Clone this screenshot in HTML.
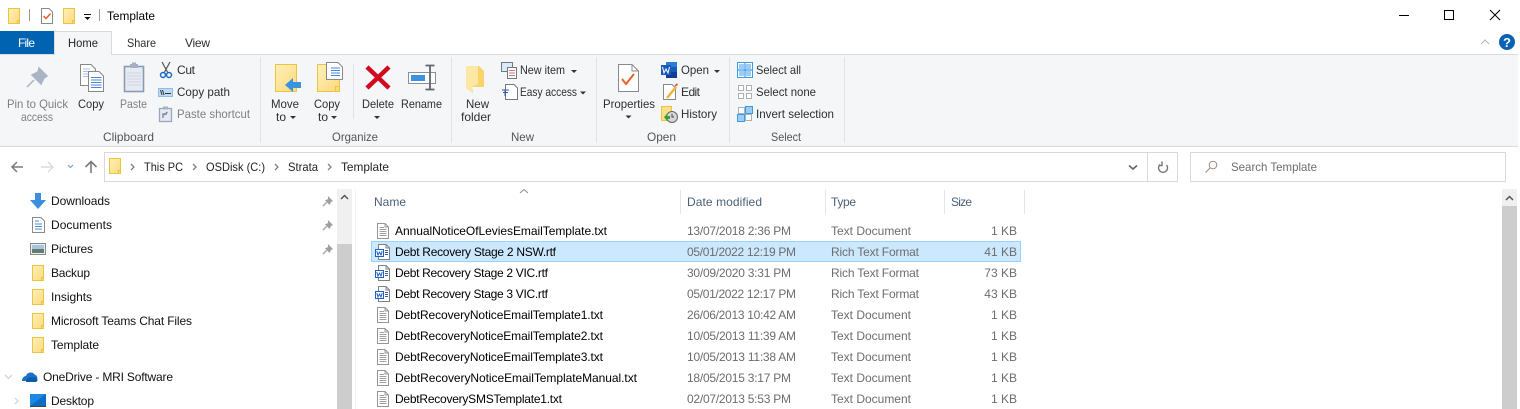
<!DOCTYPE html>
<html lang="en"><head><meta charset="utf-8"><title>Template</title>
<style>
html,body{margin:0;padding:0;background:#fff;width:1520px;height:409px;overflow:hidden}
svg{display:block}
text{font-family:"Liberation Sans",sans-serif;font-size:12px;fill:#1e1e1e}
.d{fill:#7f7f7f}.g{fill:#555}.r{fill:#2e2e2e}.h{fill:#4c607a}.m{fill:#6d6d6d}
</style></head><body>
<svg width="1520" height="409" viewBox="0 0 1520 409" xmlns="http://www.w3.org/2000/svg">
<defs>
<linearGradient id="fy" x1="0" y1="0" x2="1" y2="1"><stop offset="0" stop-color="#fff0b8"/><stop offset="1" stop-color="#fcd97c"/></linearGradient>
<symbol id="fold" overflow="visible"><path d="M.5.5H11.5V15.5H.5Z" fill="url(#fy)" stroke="#e9c544"/><path d="M9.500 15.500V12.500H11.500" fill="none" stroke="#e9c544"/></symbol>
<symbol id="txt" overflow="visible"><path d="M.5.5H8L11.5 4V15.5H.5Z" fill="#fff" stroke="#959595"/><path d="M8 .5V4H11.5" fill="none" stroke="#959595"/><path d="M2.500 4.500H7M2.500 6.500H9.500M2.500 8.500H9.500M2.500 10.500H9.500M2.500 12.500H9.500" stroke="#a0a0a0"/></symbol>
<symbol id="doc" overflow="visible"><path d="M3.500.5H11L14.500 4V15.500H3.500Z" fill="#fff" stroke="#808080"/><path d="M11 .5V4H14.500" fill="none" stroke="#808080"/><path d="M10 6.500H13M10 8.500H13M10 10.500H13" stroke="#2b5fb4"/><rect x=".5" y="5.500" width="8" height="7" fill="#fff" stroke="#1f5fbf"/><path d="M1.800 7L3 11L4.500 8.200L6 11L7.200 7" fill="none" stroke="#1f5fbf"/></symbol>
<symbol id="pin" overflow="visible"><path d="M6 1L11 6L9 7L7.500 10L3 5.500L6 4Z" fill="#a0a0a0"/><path d="M4.500 7.500L1 11" stroke="#a0a0a0" stroke-width="1.300"/></symbol>
</defs>
<rect width="1520" height="409" fill="#fff"/>

<!-- title bar -->
<use href="#fold" x="8" y="8"/>
<path d="M29.500 9V21M99.500 9V21" stroke="#9a9a9a"/>
<path d="M41.500 8.500H49L52.500 12V23.500H41.500Z" fill="#fff" stroke="#8a8a8a"/>
<path d="M43.500 16L46 18.500L50.500 13.500" fill="none" stroke="#e8622a" stroke-width="1.500"/>
<use href="#fold" x="63" y="8"/>
<path d="M84 14.500H91" stroke="#111"/><path d="M84.500 17H90.500L87.500 20Z" fill="#111"/>
<text x="107" y="20" textLength="48" lengthAdjust="spacingAndGlyphs" style="fill:#000">Template</text>
<path d="M1399 15.500H1409" stroke="#000"/>
<rect x="1444.500" y="10.500" width="9" height="9" fill="none" stroke="#000"/>
<path d="M1490 10L1500 20M1500 10L1490 20" stroke="#000"/>

<!-- tabs -->
<rect x="0" y="31" width="54" height="23" fill="#0063b1"/>
<text x="18" y="47" textLength="17" style="fill:#fff">File</text>
<rect x="0" y="54" width="1518" height="1" fill="#dadbdc"/>
<path d="M54.500 55V31.500H111.500V55" fill="#f5f6f7" stroke="#dadbdc"/>
<text x="68" y="47" textLength="30" lengthAdjust="spacingAndGlyphs" style="fill:#222">Home</text>
<text x="127" y="47" textLength="29" lengthAdjust="spacingAndGlyphs" class="r">Share</text>
<text x="185" y="47" textLength="25" class="r">View</text>
<path d="M1481 44L1485 40L1489 44" fill="none" stroke="#b5b5b5"/>
<circle cx="1507" cy="42" r="8" fill="#0a62b5"/>
<text x="1507" y="47" text-anchor="middle" style="fill:#fff;font-weight:bold;font-size:13px">?</text>

<!-- ribbon -->
<rect x="0" y="55" width="1518" height="91" fill="#f5f6f7"/>
<rect x="0" y="146" width="1518" height="1" fill="#dadbdc"/>
<path d="M260.500 57V143M451.500 57V143M596.500 57V143M729.500 57V143M844.500 57V143" stroke="#e1e3e6"/>
<path d="M353.500 64V119" stroke="#e1e3e6"/>

<!-- clipboard -->
<path d="M39 68L47 76L44 78L41 84L32 75L38 72Z M34 80L27 87" fill="#a9b4c6" stroke="#a9b4c6" stroke-width="1.500"/>
<path d="M80.500 64.500H91L95.500 69V85.500H80.500Z" fill="#fff" stroke="#888"/>
<path d="M83 69H90M83 71.500H93M83 74H93M83 76.500H93" stroke="#a8c0e8"/>
<path d="M88.500 71.500H99L103.500 76V91.500H88.500Z" fill="#fff" stroke="#888"/>
<path d="M91 77.500H101.500M91 80H101.500M91 82.500H101.500M91 85H101.500M91 87.500H101.500" stroke="#4a86d8"/>
<rect x="124.500" y="66.500" width="19" height="25" fill="#e6eaf2" stroke="#8b9ab5" stroke-width="1.600"/>
<path d="M127 73H141M127 76H141M127 79H141M127 82H141M127 85H141" stroke="#cdd4e2"/>
<rect x="130" y="64" width="8" height="4" fill="#a5b0c4"/><rect x="132" y="62.500" width="4" height="2" fill="#a5b0c4"/>
<path d="M162 62L168 73M170 62L164 73" stroke="#555" stroke-width="1.200"/>
<circle cx="163" cy="75" r="2.500" fill="none" stroke="#1c6cc4" stroke-width="1.500"/><circle cx="169" cy="75" r="2.500" fill="none" stroke="#1c6cc4" stroke-width="1.500"/>
<text x="177" y="74" textLength="18" class="r">Cut</text>
<rect x="158.500" y="88.500" width="14" height="8" fill="#bcdcf6" stroke="#8fbde6"/>
<path d="M160.500 90L162 95M162.500 90L164 95M165 93.500H171" stroke="#333"/>
<text x="177" y="96" textLength="53" lengthAdjust="spacingAndGlyphs" class="r">Copy path</text>
<rect x="159.500" y="108.500" width="12" height="13" fill="#e6eaf2" stroke="#9aa6bc" stroke-width="1.300"/><rect x="163" y="106.500" width="5" height="3" fill="#a5b0c4"/>
<path d="M163 118V114H167M164 115L167.500 112" fill="none" stroke="#7c8aa3" stroke-width="1.400"/>
<text x="177" y="118" textLength="73" lengthAdjust="spacingAndGlyphs" class="d">Paste shortcut</text>
<text x="7" y="108" textLength="61" lengthAdjust="spacingAndGlyphs" class="d">Pin to Quick</text>
<text x="21" y="121" textLength="32" lengthAdjust="spacingAndGlyphs" class="d">access</text>
<text x="78" y="108" textLength="26" lengthAdjust="spacingAndGlyphs" class="r">Copy</text>
<text x="120" y="108" textLength="27" lengthAdjust="spacingAndGlyphs" class="d">Paste</text>
<text x="103" y="141" textLength="51" lengthAdjust="spacingAndGlyphs" class="g">Clipboard</text>

<!-- organize -->
<path d="M275.500 64.500H296.500V91.500H275.500Z" fill="url(#fy)" stroke="#e9c544"/>
<path d="M285 85L293 78V82H301V88H293V92Z" fill="#3b93e0"/>
<text x="271" y="108" textLength="28" lengthAdjust="spacingAndGlyphs" class="r">Move</text>
<text x="276" y="121" class="r">to</text><path d="M290 116H296L293 119Z" fill="#333"/>
<path d="M317.500 64.500H339.500V91.500H317.500Z" fill="url(#fy)" stroke="#e9c544"/><path d="M335.500 91V86.500H339.500" fill="none" stroke="#e9c544"/>
<path d="M326.500 62.500H338L342.500 67V79.500H326.500Z" fill="#fff" stroke="#888"/>
<path d="M331 68H340M331 70.500H340M331 73H340M331 75.500H340" stroke="#4a86d8"/>
<text x="314" y="108" textLength="26" lengthAdjust="spacingAndGlyphs" class="r">Copy</text>
<text x="318" y="121" class="r">to</text><path d="M331 116H337L334 119Z" fill="#333"/>
<path d="M367 67L389 88M389 67L367 88" stroke="#d2081f" stroke-width="4.500"/>
<text x="362" y="108" textLength="32" lengthAdjust="spacingAndGlyphs" class="r">Delete</text><path d="M374 116H380L377 119Z" fill="#333"/>
<rect x="408.500" y="72.500" width="27" height="11" fill="#fff" stroke="#8a8f99"/>
<rect x="411" y="75" width="14" height="6" fill="#3b93e0"/>
<path d="M430 66V89M425.500 65.500H434.500M425.500 89.500H434.500" stroke="#60656e" stroke-width="1.800" fill="none"/>
<text x="401" y="108" textLength="41" lengthAdjust="spacingAndGlyphs" class="r">Rename</text>
<text x="332" y="141" textLength="46" lengthAdjust="spacingAndGlyphs" class="g">Organize</text>

<!-- new -->
<path d="M466 66H479L484 71V87H472L473 93L466 88Z" fill="#fbd36b"/><path d="M466 66H478V84L472 87V93L466 88Z" fill="#fde7a4"/>
<text x="466" y="108" textLength="23" lengthAdjust="spacingAndGlyphs" class="r">New</text>
<text x="461" y="121" class="r">folder</text>
<rect x="501.500" y="62.500" width="11" height="9" fill="#dbe9f8" stroke="#6d7a8c"/>
<path d="M507.500 67.500H516.500V78.500H507.500Z" fill="#fff" stroke="#777"/><path d="M509 70.500H515M509 73H515M509 75.500H515" stroke="#c47a7a"/>
<text x="520" y="74" textLength="45" lengthAdjust="spacingAndGlyphs" class="r">New item</text><path d="M571 70H577L574 73Z" fill="#333"/>
<path d="M505.500 84.500H514L517.500 88V99.500H505.500Z" fill="#fff" stroke="#777"/>
<path d="M502 90H509M503 92.500H508M505 90V96" stroke="#2b5fa8" fill="none"/>
<text x="520" y="96" textLength="57" lengthAdjust="spacingAndGlyphs" class="r">Easy access</text><path d="M580 91.500H586L583 94.500Z" fill="#333"/>
<text x="511" y="141" textLength="23" lengthAdjust="spacingAndGlyphs" class="g">New</text>

<!-- open -->
<path d="M618.500 64.500H632L638.500 71V91.500H618.500Z" fill="#fff" stroke="#8a8a8a"/><path d="M632 64.500V71H638.500" fill="none" stroke="#8a8a8a"/>
<path d="M622 79L626 84L634 74" fill="none" stroke="#e8622a" stroke-width="2"/>
<text x="603" y="108" textLength="52" lengthAdjust="spacingAndGlyphs" class="r">Properties</text><path d="M625.500 115.500H631.500L628.500 118.500Z" fill="#333"/>
<rect x="666" y="62" width="11" height="16" fill="#2b7cd3"/><rect x="666" y="67" width="11" height="5" fill="#185abd"/><rect x="666" y="72" width="11" height="6" fill="#103f91"/>
<rect x="661" y="65" width="10" height="10" fill="#185abd"/>
<path d="M662.500 67L664 73L666 69L668 73L669.500 67" fill="none" stroke="#fff"/>
<text x="681" y="74" textLength="28" lengthAdjust="spacingAndGlyphs" class="r">Open</text><path d="M714 70H720L717 73Z" fill="#333"/>
<path d="M663.500 84.500H672L675.500 88V99.500H663.500Z" fill="#fff" stroke="#888"/>
<path d="M667 98L676 87" stroke="#eeb43a" stroke-width="2.500"/><path d="M675 86L677.500 84" stroke="#e2574c" stroke-width="1.800"/>
<text x="681" y="96" textLength="19" class="r">Edit</text>
<rect x="661.500" y="106.500" width="10" height="14" fill="#fbe08c" stroke="#e9c544"/>
<circle cx="672" cy="117" r="5.500" fill="#d6d6d6" stroke="#666"/>
<path d="M672 114V117H674" stroke="#444" fill="none"/><path d="M664 117L667 114V116H670V119H667V121Z" fill="#33a03a"/>
<text x="681" y="118" textLength="36" lengthAdjust="spacingAndGlyphs" class="r">History</text>
<text x="647" y="141" textLength="29" lengthAdjust="spacingAndGlyphs" class="g">Open</text>

<!-- select -->
<rect x="737.500" y="62.500" width="15" height="15" fill="#fff" stroke="#3c9be8"/>
<path d="M745 62.500V77.500M737.500 70H752.500" stroke="#3c9be8" stroke-width="1.200"/>
<path d="M739 64H744V69H739ZM746 64H751V69H746ZM739 71H744V76H739ZM746 71H751V76H746Z" fill="#9ccdf5"/>
<text x="756" y="74" textLength="45" lengthAdjust="spacingAndGlyphs" class="r">Select all</text>
<path d="M738.500 85.500H743.500V90.500H738.500ZM746.500 85.500H751.500V90.500H746.500ZM738.500 93.500H743.500V98.500H738.500ZM746.500 93.500H751.500V98.500H746.500Z" fill="#fff" stroke="#b0b0b0"/>
<text x="756" y="96" textLength="60" lengthAdjust="spacingAndGlyphs" class="r">Select none</text>
<path d="M738.500 107.500H744.500V113.500H738.500ZM745.500 114.500H751.500V120.500H745.500Z" fill="#fff" stroke="#b0b0b0"/>
<path d="M745.500 106.500H752.500V113.500H745.500ZM737.500 114.500H744.500V121.500H737.500Z" fill="#9ccdf5" stroke="#3c9be8"/>
<text x="756" y="118" textLength="78" lengthAdjust="spacingAndGlyphs" class="r">Invert selection</text>
<text x="771" y="141" textLength="30" lengthAdjust="spacingAndGlyphs" class="g">Select</text>

<!-- nav -->
<path d="M23 167H12.500M17 162L12 167L17 172" fill="none" stroke="#7a7a7a" stroke-width="1.500"/>
<path d="M41 167H52.500M48 162L53 167L48 172" fill="none" stroke="#dcdcdc" stroke-width="1.500"/>
<path d="M68 165L70.500 167.500L73 165" fill="none" stroke="#6ea7dc" stroke-width="1.200"/>
<path d="M91 173V162M85.500 167L91 161.500L96.500 167" fill="none" stroke="#7a7a7a" stroke-width="1.600"/>
<rect x="104.500" y="152.500" width="1073" height="29" fill="#fff" stroke="#d9d9d9"/>
<path d="M1147.500 153V181" stroke="#d9d9d9"/>
<use href="#fold" x="109" y="158"/>
<path d="M131 164L134 167L131 170M193 164L196 167L193 170M275 164L278 167L275 170M328 164L331 167L328 170" fill="none" stroke="#808080" stroke-width="1.300"/>
<text x="144" y="171" textLength="39" lengthAdjust="spacingAndGlyphs" style="fill:#222">This PC</text>
<text x="206" y="171" textLength="59" lengthAdjust="spacingAndGlyphs" style="fill:#222">OSDisk (C:)</text>
<text x="288" y="171" textLength="30" lengthAdjust="spacingAndGlyphs" style="fill:#222">Strata</text>
<text x="341" y="171" textLength="48" lengthAdjust="spacingAndGlyphs" style="fill:#222">Template</text>
<path d="M1129 165.500L1133 169L1137 165.500" fill="none" stroke="#666" stroke-width="1.600"/>
<path d="M1160 163.500A4.500 4.500 0 1 0 1166.500 164M1162 160.500V164.500H1158.500" fill="none" stroke="#777" stroke-width="1.400" transform="translate(0,1)"/>
<rect x="1190.500" y="152.500" width="315" height="29" fill="#fff" stroke="#d9d9d9"/>
<circle cx="1213" cy="165" r="3.800" fill="none" stroke="#a08a7a"/><path d="M1210 168L1205.500 172.500" stroke="#a08a7a"/>
<text x="1231" y="171" textLength="86" lengthAdjust="spacingAndGlyphs" class="m">Search Template</text>

<!-- sidebar -->
<path d="M35 193H41V200H46L38 209L30 200H35Z" fill="#3a8fe0"/>
<text x="51" y="205" textLength="59" style="fill:#111">Downloads</text>
<path d="M32.500 217.500H41L44.500 221V232.500H32.500Z" fill="#fff" stroke="#8a8a8a"/><path d="M35 221H39M35 224H42M35 226.500H42M35 229H42" stroke="#4a90d0"/>
<text x="51" y="229" textLength="61" style="fill:#111">Documents</text>
<rect x="30.500" y="243.500" width="15" height="11" fill="#eee" stroke="#888"/><rect x="32" y="245" width="12" height="4" fill="#a9c4de"/><rect x="32" y="249" width="12" height="4" fill="#5f7f6a"/>
<text x="51" y="253" textLength="42" style="fill:#111">Pictures</text>
<use href="#fold" x="32" y="265"/><text x="51" y="277" textLength="39" style="fill:#111">Backup</text>
<use href="#fold" x="32" y="289"/><text x="51" y="301" textLength="41" style="fill:#111">Insights</text>
<use href="#fold" x="32" y="313"/><text x="51" y="325" textLength="141" style="fill:#111">Microsoft Teams Chat Files</text>
<use href="#fold" x="32" y="337"/><text x="51" y="349" textLength="48" style="fill:#111">Template</text>
<use href="#pin" x="322" y="195"/><use href="#pin" x="322" y="219"/><use href="#pin" x="322" y="243"/>
<path d="M5 375L8.500 378.500L12 375" fill="none" stroke="#d5d5d5" stroke-width="1.300"/>
<path d="M22 381C22 377 25 376 26 376C27 372 33 371 35 375C38 375 38 381 36 381Z" fill="#1a73c7"/><path d="M26 381C27 377 33 376 36 378C38 379 38 381 36 382H26Z" fill="#0f5cab"/>
<text x="43" y="381" textLength="130" style="fill:#111">OneDrive - MRI Software</text>
<path d="M15 398L18 401L15 404" fill="none" stroke="#d5d5d5" stroke-width="1.300"/>
<rect x="30" y="394" width="16" height="12" fill="#1e88e5"/><path d="M30 406L46 394V406Z" fill="#0f6cc4"/><rect x="30" y="406" width="16" height="1" fill="#444"/>
<text x="51" y="405" textLength="43" style="fill:#111">Desktop</text>
<!-- scrollbars -->
<rect x="337" y="189" width="15" height="220" fill="#f0f0f0"/>
<rect x="337" y="244" width="15" height="165" fill="#cdcdcd"/>
<path d="M341 199L344.500 195.500L348 199" fill="none" stroke="#555" stroke-width="1.500"/>
<rect x="355" y="189" width="1" height="220" fill="#f3f3f3"/>
<rect x="1502" y="189" width="15" height="17" fill="#f0f0f0"/>
<rect x="1502" y="206" width="15" height="203" fill="#cdcdcd"/>
<path d="M1506 200L1509.500 196.500L1513 200" fill="none" stroke="#555" stroke-width="1.500"/>

<!-- file headers -->
<path d="M520 193L524 189.500L528 193" fill="none" stroke="#8a8a8a"/>
<path d="M680.500 190V214M825.500 190V214M944.500 190V214M1024.500 190V214" stroke="#e5e5e5"/>
<text x="374" y="206" textLength="32" lengthAdjust="spacingAndGlyphs" class="h">Name</text>
<text x="687" y="206" textLength="75" class="h">Date modified</text>
<text x="831" y="206" textLength="25" class="h">Type</text>
<text x="951" y="206" textLength="21" class="h">Size</text>

<!-- rows -->
<rect x="371.500" y="241.500" width="649" height="20" fill="#cce8ff" stroke="#99d1ff"/>
<use href="#txt" x="377" y="223"/>
<text x="395" y="235" textLength="212" style="fill:#000">AnnualNoticeOfLeviesEmailTemplate.txt</text>
<text x="687" y="235" textLength="104" class="m">13/07/2018 2:36 PM</text>
<text x="831" y="235" textLength="80" class="m">Text Document</text>
<text x="1017" y="235" text-anchor="end" class="m">1 KB</text>

<use href="#doc" x="375" y="244"/>
<text x="395" y="256" textLength="161" style="fill:#000">Debt Recovery Stage 2 NSW.rtf</text>
<text x="687" y="256" textLength="109" class="m">05/01/2022 12:19 PM</text>
<text x="831" y="256" textLength="88" class="m">Rich Text Format</text>
<text x="1017" y="256" text-anchor="end" class="m">41 KB</text>

<use href="#doc" x="375" y="265"/>
<text x="395" y="277" textLength="153" style="fill:#000">Debt Recovery Stage 2 VIC.rtf</text>
<text x="687" y="277" textLength="104" class="m">30/09/2020 3:31 PM</text>
<text x="831" y="277" textLength="88" class="m">Rich Text Format</text>
<text x="1017" y="277" text-anchor="end" class="m">73 KB</text>

<use href="#doc" x="375" y="286"/>
<text x="395" y="298" textLength="153" style="fill:#000">Debt Recovery Stage 3 VIC.rtf</text>
<text x="687" y="298" textLength="109" class="m">05/01/2022 12:17 PM</text>
<text x="831" y="298" textLength="88" class="m">Rich Text Format</text>
<text x="1017" y="298" text-anchor="end" class="m">43 KB</text>

<use href="#txt" x="377" y="307"/>
<text x="395" y="319" textLength="208" style="fill:#000">DebtRecoveryNoticeEmailTemplate1.txt</text>
<text x="687" y="319" textLength="109" class="m">26/06/2013 10:42 AM</text>
<text x="831" y="319" textLength="80" class="m">Text Document</text>
<text x="1017" y="319" text-anchor="end" class="m">1 KB</text>

<use href="#txt" x="377" y="328"/>
<text x="395" y="340" textLength="208" style="fill:#000">DebtRecoveryNoticeEmailTemplate2.txt</text>
<text x="687" y="340" textLength="109" class="m">10/05/2013 11:39 AM</text>
<text x="831" y="340" textLength="80" class="m">Text Document</text>
<text x="1017" y="340" text-anchor="end" class="m">1 KB</text>

<use href="#txt" x="377" y="349"/>
<text x="395" y="361" textLength="208" style="fill:#000">DebtRecoveryNoticeEmailTemplate3.txt</text>
<text x="687" y="361" textLength="109" class="m">10/05/2013 11:38 AM</text>
<text x="831" y="361" textLength="80" class="m">Text Document</text>
<text x="1017" y="361" text-anchor="end" class="m">1 KB</text>

<use href="#txt" x="377" y="370"/>
<text x="395" y="382" textLength="242" style="fill:#000">DebtRecoveryNoticeEmailTemplateManual.txt</text>
<text x="687" y="382" textLength="104" class="m">18/05/2015 3:17 PM</text>
<text x="831" y="382" textLength="80" class="m">Text Document</text>
<text x="1017" y="382" text-anchor="end" class="m">1 KB</text>

<use href="#txt" x="377" y="391"/>
<text x="395" y="403" textLength="167" style="fill:#000">DebtRecoverySMSTemplate1.txt</text>
<text x="687" y="403" textLength="104" class="m">02/07/2013 5:53 PM</text>
<text x="831" y="403" textLength="80" class="m">Text Document</text>
<text x="1017" y="403" text-anchor="end" class="m">1 KB</text>
</svg>
</body></html>
